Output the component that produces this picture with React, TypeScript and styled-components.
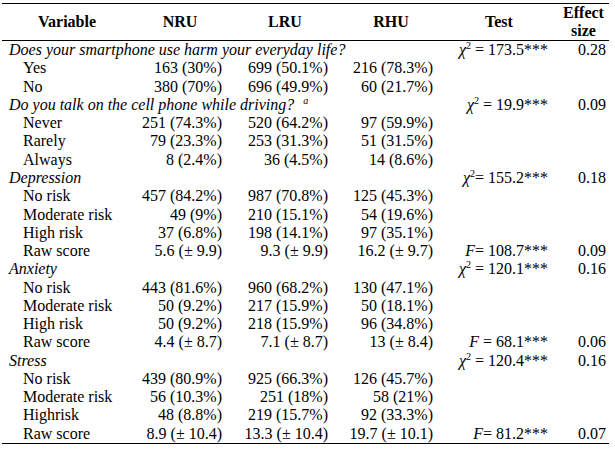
import * as React from 'react'
import styled, { createGlobalStyle } from 'styled-components'

type Row =
  | { kind: 'group'; label: string; note?: string; test?: React.ReactNode; effect?: string }
  | {
      kind: 'item'
      label: string
      nru: string
      lru: string
      rhu: string
      test?: React.ReactNode
      effect?: string
    }

const Chi = ({ value, gap = true }: { value: string; gap?: boolean }) => (
  <>
    <i>χ</i>
    <sup>2</sup>
    {gap ? ' = ' : '= '}
    {value}***
  </>
)

const Fv = ({ value, gap = true }: { value: string; gap?: boolean }) => (
  <>
    <i>F</i>
    {gap ? ' = ' : '= '}
    {value}***
  </>
)

const rows: Row[] = [
  {
    kind: 'group',
    label: 'Does your smartphone use harm your everyday life?',
    test: <Chi value="173.5" />,
    effect: '0.28'
  },
  { kind: 'item', label: 'Yes', nru: '163 (30%)', lru: '699 (50.1%)', rhu: '216 (78.3%)' },
  { kind: 'item', label: 'No', nru: '380 (70%)', lru: '696 (49.9%)', rhu: '60 (21.7%)' },
  {
    kind: 'group',
    label: 'Do you talk on the cell phone while driving?',
    note: 'a',
    test: <Chi value="19.9" />,
    effect: '0.09'
  },
  { kind: 'item', label: 'Never', nru: '251 (74.3%)', lru: '520 (64.2%)', rhu: '97 (59.9%)' },
  { kind: 'item', label: 'Rarely', nru: '79 (23.3%)', lru: '253 (31.3%)', rhu: '51 (31.5%)' },
  { kind: 'item', label: 'Always', nru: '8 (2.4%)', lru: '36 (4.5%)', rhu: '14 (8.6%)' },
  { kind: 'group', label: 'Depression', test: <Chi value="155.2" gap={false} />, effect: '0.18' },
  { kind: 'item', label: 'No risk', nru: '457 (84.2%)', lru: '987 (70.8%)', rhu: '125 (45.3%)' },
  { kind: 'item', label: 'Moderate risk', nru: '49 (9%)', lru: '210 (15.1%)', rhu: '54 (19.6%)' },
  { kind: 'item', label: 'High risk', nru: '37 (6.8%)', lru: '198 (14.1%)', rhu: '97 (35.1%)' },
  {
    kind: 'item',
    label: 'Raw score',
    nru: '5.6 (± 9.9)',
    lru: '9.3 (± 9.9)',
    rhu: '16.2 (± 9.7)',
    test: <Fv value="108.7" gap={false} />,
    effect: '0.09'
  },
  { kind: 'group', label: 'Anxiety', test: <Chi value="120.1" />, effect: '0.16' },
  { kind: 'item', label: 'No risk', nru: '443 (81.6%)', lru: '960 (68.2%)', rhu: '130 (47.1%)' },
  { kind: 'item', label: 'Moderate risk', nru: '50 (9.2%)', lru: '217 (15.9%)', rhu: '50 (18.1%)' },
  { kind: 'item', label: 'High risk', nru: '50 (9.2%)', lru: '218 (15.9%)', rhu: '96 (34.8%)' },
  {
    kind: 'item',
    label: 'Raw score',
    nru: '4.4 (± 8.7)',
    lru: '7.1 (± 8.7)',
    rhu: '13 (± 8.4)',
    test: <Fv value="68.1" />,
    effect: '0.06'
  },
  { kind: 'group', label: 'Stress', test: <Chi value="120.4" />, effect: '0.16' },
  { kind: 'item', label: 'No risk', nru: '439 (80.9%)', lru: '925 (66.3%)', rhu: '126 (45.7%)' },
  { kind: 'item', label: 'Moderate risk', nru: '56 (10.3%)', lru: '251 (18%)', rhu: '58 (21%)' },
  { kind: 'item', label: 'Highrisk', nru: '48 (8.8%)', lru: '219 (15.7%)', rhu: '92 (33.3%)' },
  {
    kind: 'item',
    label: 'Raw score',
    nru: '8.9 (± 10.4)',
    lru: '13.3 (± 10.4)',
    rhu: '19.7 (± 10.1)',
    test: <Fv value="81.2" gap={false} />,
    effect: '0.07'
  }
]

const SERIF = `'Liberation Serif', Tinos, 'Times New Roman', 'DejaVu Serif', serif`

const App = () => {
  return (
    <>
      <GlobalStyle />
      <Table>
        <colgroup>
          <col style={{ width: 130 }} />
          <col style={{ width: 96 }} />
          <col style={{ width: 114 }} />
          <col style={{ width: 98 }} />
          <col style={{ width: 118 }} />
          <col style={{ width: 51 }} />
        </colgroup>
        <thead>
          <tr>
            <Head>Variable</Head>
            <Head>NRU</Head>
            <Head>LRU</Head>
            <Head>RHU</Head>
            <Head>Test</Head>
            <Head>
              Effect
              <br />
              size
            </Head>
          </tr>
        </thead>
        <tbody>
          {rows.map((row, key) =>
            row.kind === 'group' ? (
              <tr key={key}>
                <GroupLabel colSpan={4}>
                  {row.label}
                  {row.note && <Note>{row.note}</Note>}
                </GroupLabel>
                <TestCell>{row.test}</TestCell>
                <EffectCell>{row.effect}</EffectCell>
              </tr>
            ) : (
              <tr key={key}>
                <ItemLabel>{row.label}</ItemLabel>
                <Value pad={6}>{row.nru}</Value>
                <Value pad={14}>{row.lru}</Value>
                <Value pad={7}>{row.rhu}</Value>
                <TestCell>{row.test}</TestCell>
                <EffectCell>{row.effect}</EffectCell>
              </tr>
            )
          )}
        </tbody>
      </Table>
    </>
  )
}

export default App

const GlobalStyle = createGlobalStyle`
  html, body {
    margin: 0;
    padding: 0;
    background: #ffffff;
  }
  body {
    font-family: ${SERIF};
    color: #000000;
  }
`

const Table = styled.table`
  margin: 3px 0 0 2px;
  width: 607px;
  table-layout: fixed;
  border-collapse: collapse;
  font-family: ${SERIF};
  font-size: 16px;
  color: #000;
  border-top: 1.5px solid #000;
  border-bottom: 1.5px solid #000;

  td,
  th,
  i,
  sup {
    font-family: ${SERIF};
  }

  td {
    height: 18.27px;
    padding-top: 0;
    padding-bottom: 0;
    line-height: 18px;
    white-space: nowrap;
    vertical-align: middle;
  }

  sup {
    font-size: 10px;
    line-height: 0;
    vertical-align: 6px;
  }
`

const Head = styled.th`
  height: 36px;
  padding: 0;
  font-size: 16px;
  font-weight: 700;
  line-height: 18px;
  text-align: center;
  vertical-align: middle;
  border-bottom: 1.5px solid #000;
`

const GroupLabel = styled.td`
  padding-left: 7px;
  font-style: italic;
  overflow: visible;
`

const Note = styled.sup`
  margin-left: 9px;
  font-style: italic;
`

const ItemLabel = styled.td`
  padding-left: 21px;
`

const Value = styled.td<{ pad: number }>`
  text-align: right;
  padding-right: ${({ pad }) => pad}px;
`

const TestCell = styled.td`
  text-align: right;
  padding-right: 10px;
`

const EffectCell = styled.td`
  text-align: right;
  padding-right: 3px;
`
